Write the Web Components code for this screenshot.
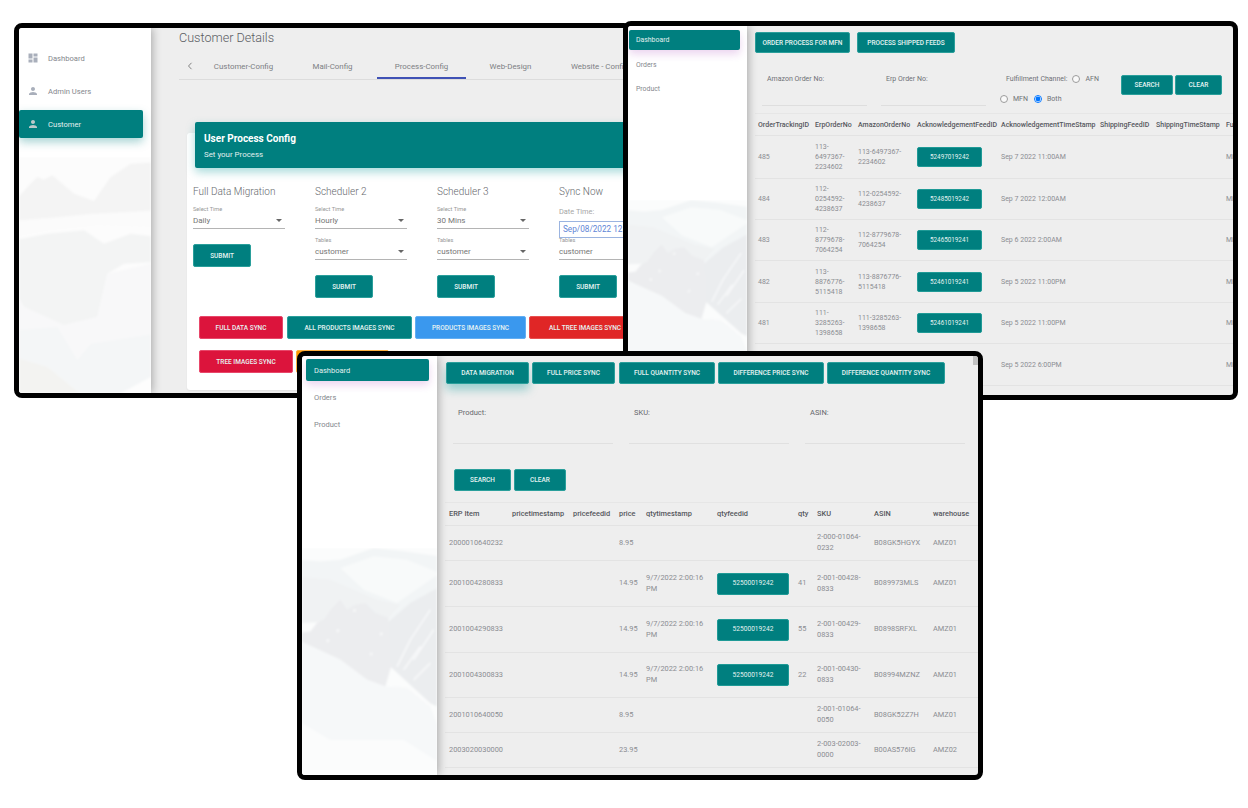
<!DOCTYPE html>
<html>
<head>
<meta charset="utf-8">
<title>Screens</title>
<style>
    html, body { margin: 0; height: 100%; background: #fff; overflow: hidden; }
    body { position: relative; width: 1248px; height: 808px; font-family: Roboto, "Liberation Sans", sans-serif; }
</style>
</head>
<body>

<app-window style="left:14px;top:23px;width:618px;height:375px">
    <side-bar slot="side" style="width:132px;--scene-h:236px;--pad:16px;--gap:5px;--ml:0px;--mr:8px;--fs:7.6px;--h:28px;--tx:8px;--glow:0 4px 10px rgba(0,128,128,.35)">
        <mountain-scene slot="scene" kind="peaks"></mountain-scene>
        <nav-item icon="dash">Dashboard</nav-item>
        <nav-item icon="user">Admin Users</nav-item>
        <nav-item icon="user" active>Customer</nav-item>
    </side-bar>
    <customer-view></customer-view>
</app-window>

<app-window style="left:623px;top:21px;width:615px;height:379px">
    <side-bar slot="side" style="width:119px;--scene-h:195px;--pad:4px;--gap:4.5px;--ml:1px;--mr:7px;--fs:6.9px;--h:20px;--tx:7px">
        <mountain-scene slot="scene" kind="valley"></mountain-scene>
        <nav-item active>Dashboard</nav-item>
        <nav-item>Orders</nav-item>
        <nav-item>Product</nav-item>
    </side-bar>
    <orders-view></orders-view>
</app-window>

<app-window style="left:297px;top:351px;width:686px;height:429px">
    <side-bar slot="side" style="width:135px;--scene-h:227px;--pad:3px;--gap:5px;--ml:4px;--mr:8px;--fs:7.5px;--h:22px;--tx:8px">
        <mountain-scene slot="scene" kind="valley"></mountain-scene>
        <nav-item active>Dashboard</nav-item>
        <nav-item>Orders</nav-item>
        <nav-item>Product</nav-item>
    </side-bar>
    <products-view></products-view>
</app-window>

<script>
const TEAL = '#007f7f';

class AppWindow extends HTMLElement {
    constructor() {
        super();
        this.attachShadow({ mode: 'open' });
        this.shadowRoot.innerHTML = `
            <style>
                :host {
                    position: absolute;
                    display: flex;
                    isolation: isolate;
                    box-sizing: border-box;
                    border: 5px solid #000;
                    border-radius: 8px;
                    background: #eee;
                    overflow: hidden;
                }
                .main {
                    flex: 1;
                    min-width: 0;
                    position: relative;
                    overflow: hidden;
                }
            </style>
            <slot name="side"></slot>
            <div class="main"><slot></slot></div>
        `;
    }
}

class SideBar extends HTMLElement {
    constructor() {
        super();
        this.attachShadow({ mode: 'open' });
        this.shadowRoot.innerHTML = `
            <style>
                :host {
                    display: block;
                    position: relative;
                    flex: none;
                    height: 100%;
                    background: #fff;
                    box-shadow: 1px 0 9px rgba(0, 0, 0, .32);
                    z-index: 2;
                }
                .nav {
                    position: relative;
                    display: flex;
                    flex-direction: column;
                    gap: var(--gap);
                    padding: var(--pad) var(--mr) 0 var(--ml);
                }
            </style>
            <slot name="scene"></slot>
            <div class="nav"><slot></slot></div>
        `;
    }
}

class MountainScene extends HTMLElement {
    constructor() {
        super();
        this.attachShadow({ mode: 'open' });
    }

    connectedCallback() {
        const peaks = `
            <svg viewBox="15 80 396 708" preserveAspectRatio="none">
                <rect x="0" y="80" width="430" height="720" fill="#fcfcfc"/>
                <polygon fill="#f4f4f4" points="0,215 45,165 70,140 90,148 115,135 150,165 180,190 240,212 290,140 350,100 430,95 430,240 300,255 240,250 120,262 0,272"/>
                <polygon fill="#fbfbfb" points="0,272 120,262 240,250 430,240 430,290 250,285 100,300 0,320"/>
                <polygon fill="#f3f4f4" points="0,330 100,310 210,300 270,340 350,310 430,320 430,395 330,400 280,430 250,560 150,585 30,530 0,480"/>
                <polygon fill="#f8f8f9" points="0,480 30,530 150,585 250,560 280,430 430,395 430,650 300,700 210,800 0,800"/>
                <polygon fill="#f4f6f7" points="0,600 130,590 190,690 230,640 430,610 430,730 300,800 210,800 100,710 0,680"/>
                <polygon fill="#f3f3f1" points="0,680 100,710 210,800 0,800"/>
                <polygon fill="#fdfdfd" points="300,800 430,730 430,800"/>
            </svg>`;
        const valley = `
            <svg viewBox="15 85 405 680" preserveAspectRatio="none">
                <rect x="0" y="85" width="430" height="690" fill="#fbfcfc"/>
                <polygon fill="#f2f5f6" points="0,120 70,125 130,120 230,85 320,95 430,110 430,300 0,300"/>
                <polygon fill="#f8fafa" points="130,145 230,110 330,120 430,160 300,250 200,210"/>
                <polygon fill="#f0f2f3" points="0,170 100,180 240,240 310,255 270,300 0,310"/>
                <polygon fill="#ebedef" points="430,200 340,250 270,310 280,440 400,550 430,565"/>
                <polygon fill="#ecedef" points="0,340 40,335 60,310 80,300 105,265 130,240 150,270 175,255 205,250 235,280 275,295 282,440 265,500 210,480 130,420 0,360"/>
                <polygon fill="#f6f8f9" points="0,360 130,420 210,480 265,500 330,505 400,560 430,640 430,730 320,660 100,660 160,775 0,775"/>
                <polygon fill="#fbfcfc" points="0,600 100,660 160,775 0,775"/>
                <polygon fill="#fbfcfc" points="100,660 320,660 430,730 430,775 160,775"/>
                <path d="M290 500 330 505 390 555M400 270 340 360 300 440M370 380 320 450M410 330 350 420M400 430 350 480" fill="none" stroke="#f8f9fa" stroke-width="5"/>
                <path d="M170 270 175 275M120 330 125 335M220 400 225 405M90 360 95 365M250 340 255 345" fill="none" stroke="#f9fafa" stroke-width="8"/>
            </svg>`;
        this.shadowRoot.innerHTML = `
            <style>
                :host {
                    position: absolute;
                    left: 0;
                    right: 0;
                    bottom: 0;
                    height: var(--scene-h);
                    overflow: hidden;
                }
                svg { display: block; width: 100%; height: 100%; filter: blur(1px); }
            </style>
            ${this.getAttribute('kind') === 'peaks' ? peaks : valley}
        `;
    }
}

class NavItem extends HTMLElement {
    constructor() {
        super();
        this.attachShadow({ mode: 'open' });
    }

    connectedCallback() {
        const icons = {
            dash: 'M3 13h8V3H3v10zm0 8h8v-6H3v6zm10 0h8V11h-8v10zm0-18v6h8V3h-8z',
            user: 'M12 12c2.21 0 4-1.79 4-4s-1.79-4-4-4-4 1.79-4 4 1.79 4 4 4zm0 2c-2.67 0-8 1.34-8 4v2h16v-2c0-2.66-5.33-4-8-4z'
        };
        const name = this.getAttribute('icon');
        const icon = name ? `<svg viewBox="0 0 24 24"><path d="${icons[name]}"/></svg>` : '';
        this.shadowRoot.innerHTML = `
            <style>
                :host {
                    display: flex;
                    align-items: center;
                    gap: 9px;
                    box-sizing: border-box;
                    height: var(--h);
                    padding-left: var(--tx);
                    font-size: var(--fs);
                    color: #85878d;
                    border-radius: 2px;
                }
                :host([active]) {
                    background: ${TEAL};
                    color: #e2f0ef;
                    box-shadow: var(--glow, 0 4px 8px rgba(156, 39, 176, .2));
                }
                svg { width: 12px; height: 12px; fill: #a9afbb; flex: none; }
                :host([active]) svg { fill: #bccaca; }
            </style>
            ${icon}<slot></slot>
        `;
    }
}

class TealBtn extends HTMLElement {
    constructor() {
        super();
        this.attachShadow({ mode: 'open' });
        this.shadowRoot.innerHTML = `
            <style>
                :host {
                    display: inline-flex;
                    align-items: center;
                    justify-content: center;
                    flex: none;
                    box-sizing: border-box;
                    width: var(--w, auto);
                    height: var(--bh, 23px);
                    background: var(--bg, ${TEAL});
                    border: 1px solid var(--line, #2a9f9b);
                    border-radius: 2px;
                    color: #e6f3f2;
                    font-size: 6.5px;
                    font-weight: 500;
                    white-space: nowrap;
                    overflow: hidden;
                }
            </style>
            <slot></slot>
        `;
    }
}

class SelectField extends HTMLElement {
    constructor() {
        super();
        this.attachShadow({ mode: 'open' });
        this.shadowRoot.innerHTML = `
            <style>
                :host {
                    display: block;
                    width: 92px;
                    border-bottom: 1px solid #b4b4b4;
                }
                .label {
                    height: 8px;
                    line-height: 8px;
                    font-size: 5.6px;
                    color: #989898;
                }
                .value {
                    display: flex;
                    justify-content: space-between;
                    align-items: center;
                    height: 15px;
                    font-size: 8px;
                    color: #767676;
                }
                .caret {
                    width: 0;
                    height: 0;
                    margin-right: 3px;
                    border: 3px solid transparent;
                    border-top: 3px solid #666;
                    border-bottom: 0;
                }
            </style>
            <div class="label"></div>
            <div class="value"><slot></slot><span class="caret"></span></div>
        `;
    }

    connectedCallback() {
        this.shadowRoot.querySelector('.label').textContent = this.getAttribute('label');
    }
}

class DataTable extends HTMLElement {
    constructor() {
        super();
        this.attachShadow({ mode: 'open' });
    }

    set data(t) {
        const cols = t.cols.map(c => c + 'px').join(' ');
        const cell = c => {
            if (c && c.btn) return `<div class="c"><teal-btn style="--w:${t.btnW}px;--bh:${t.btnH}px">${c.btn}</teal-btn></div>`;
            return `<div class="c">${c || ''}</div>`;
        };
        this.shadowRoot.innerHTML = `
            <style>
                :host {
                    display: block;
                    font-size: ${t.fs}px;
                    line-height: ${t.lh}px;
                    color: #8b8d92;
                }
                .r {
                    display: grid;
                    grid-template-columns: ${cols};
                    align-items: center;
                    box-sizing: border-box;
                    border-bottom: 1px solid #e3e3e3;
                }
                .head {
                    border-top: 1px solid #e6e6e6;
                    color: #55575d;
                    font-weight: 500;
                    white-space: nowrap;
                }
                .c {
                    box-sizing: border-box;
                    padding: 0 3px 0 ${t.pad}px;
                    min-width: 0;
                }
                .c teal-btn { font-size: ${t.btnFs}px; font-weight: 400; --line: #1f9a96; }
            </style>
            <div class="r head" style="height:${t.headH}px">${t.heads.map(h => `<div class="c">${h}</div>`).join('')}</div>
            ${t.rows.map((r, i) => `<div class="r" style="height:${t.heights[i]}px">${r.map(cell).join('')}</div>`).join('')}
        `;
    }
}

class CustomerView extends HTMLElement {
    constructor() {
        super();
        this.attachShadow({ mode: 'open' });
        const sel = (label, val) => `<select-field label="${label}">${val}</select-field>`;
        const sub = '<teal-btn style="--w:58px">SUBMIT</teal-btn>';
        this.shadowRoot.innerHTML = `
            <style>
                :host { display: block; padding-left: 28px; height: 100%; }
                h1 {
                    margin: 0;
                    height: 18px;
                    line-height: 19px;
                    font-size: 12.6px;
                    font-weight: 300;
                    color: #5a5d63;
                }
                .tabs {
                    display: flex;
                    margin-top: 7px;
                    height: 26px;
                    border-bottom: 1px solid #dcdcdc;
                    font-size: 7.9px;
                    color: #7c7e83;
                    white-space: nowrap;
                }
                .arrow { width: 20px; flex: none; display: flex; align-items: center; padding-left: 8px; box-sizing: border-box; }
                .arrow svg { width: 6px; height: 8px; fill: none; stroke: #777; stroke-width: .9; }
                .tab {
                    width: 89px;
                    flex: none;
                    display: flex;
                    align-items: center;
                    justify-content: center;
                    box-sizing: border-box;
                    height: 26px;
                }
                .tab.on { border-bottom: 2px solid #3f51b5; padding-top: 2px; }
                .card {
                    width: 520px;
                    height: 257px;
                    margin: 53px 0 0 8px;
                    background: #fff;
                    border-radius: 3px;
                    box-shadow: 0 1px 2px rgba(0, 0, 0, .06);
                }
                .card-head {
                    position: relative;
                    top: -11px;
                    box-sizing: border-box;
                    height: 46px;
                    margin-left: 8px;
                    padding: 10px 9px;
                    background: ${TEAL};
                    border-radius: 2px;
                    box-shadow: 0 4px 10px rgba(0, 150, 150, .35);
                    color: #fff;
                }
                .card-head b { display: block; font-size: 10px; line-height: 13px; font-weight: 700; }
                .card-head span { display: block; margin-top: 5px; font-size: 7.9px; line-height: 10px; color: #e0efef; }
                .body { margin-top: -11px; padding: 16px 0 0 6px; }
                .grid { display: grid; grid-template-columns: repeat(4, 122px); }
                .col h2 {
                    margin: 0 0 5px;
                    height: 16px;
                    line-height: 16px;
                    font-size: 10px;
                    font-weight: 300;
                    color: #66686d;
                }
                .col select-field + select-field { margin-top: 7px; }
                .col teal-btn { margin-top: 15px; }
                .dt { height: 16px; line-height: 14px; font-size: 7.4px; color: #a6a6a6; }
                .date {
                    box-sizing: border-box;
                    width: 92px;
                    height: 17px;
                    margin-bottom: -2px;
                    padding-left: 3px;
                    line-height: 15px;
                    border: 1px solid #9bb4e0;
                    font-size: 8.2px;
                    color: #5f86d6;
                    white-space: nowrap;
                    background: #fff;
                }
                .row { display: flex; gap: 3px; margin-left: 6px; }
                .row.a { margin-top: 18px; }
                .row.a teal-btn:first-child { margin-right: 1px; }
                .row.b { margin-top: 11px; }
            </style>
            <h1>Customer Details</h1>
            <div class="tabs">
                <div class="arrow"><svg viewBox="0 0 6 8"><path d="M4.5 .8 1.5 4l3 3.2"/></svg></div>
                <div class="tab">Customer-Config</div>
                <div class="tab">Mail-Config</div>
                <div class="tab on">Process-Config</div>
                <div class="tab">Web-Design</div>
                <div class="tab">Website - Config</div>
            </div>
            <div class="card">
                <div class="card-head"><b>User Process Config</b><span>Set your Process</span></div>
                <div class="body">
                    <div class="grid">
                        <div class="col"><h2>Full Data Migration</h2>${sel('Select Time', 'Daily')}${sub}</div>
                        <div class="col"><h2>Scheduler 2</h2>${sel('Select Time', 'Hourly')}${sel('Tables', 'customer')}${sub}</div>
                        <div class="col"><h2>Scheduler 3</h2>${sel('Select Time', '30 Mins')}${sel('Tables', 'customer')}${sub}</div>
                        <div class="col"><h2>Sync Now</h2><div class="dt">Date Time:</div><div class="date">Sep/08/2022 12:00</div>${sel('Tables', 'customer')}${sub}</div>
                    </div>
                    <div class="row a">
                        <teal-btn style="--bg:#dc143c;--line:#e8476a;--w:84px">FULL DATA SYNC</teal-btn>
                        <teal-btn style="--w:125px">ALL PRODUCTS IMAGES SYNC</teal-btn>
                        <teal-btn style="--bg:#3a98ee;--line:#62aef3;--w:111px">PRODUCTS IMAGES SYNC</teal-btn>
                        <teal-btn style="--bg:#e02626;--line:#e85050;--w:112px">ALL TREE IMAGES SYNC</teal-btn>
                    </div>
                    <div class="row b">
                        <teal-btn style="--bg:#dc143c;--line:#e8476a;--w:94px">TREE IMAGES SYNC</teal-btn>
                        <teal-btn style="--bg:#ff9800;--line:#ffb040;--w:93px"></teal-btn>
                    </div>
                </div>
            </div>
        `;
    }
}

class OrdersView extends HTMLElement {
    constructor() {
        super();
        this.attachShadow({ mode: 'open' });
        this.shadowRoot.innerHTML = `
            <style>
                :host { display: block; padding: 6px 0 0 8px; height: 100%; box-sizing: border-box; color: #6f7176; }
                .tools { display: flex; gap: 7px; --bh: 21px; }
                .form { display: flex; height: 60px; font-size: 7px; }
                .field { box-sizing: border-box; width: 105px; height: 53px; margin-right: 14px; padding: 21px 0 0 5px; line-height: 10px; border-bottom: 1px solid #dedede; }
                .first { margin-left: 7px; }
                .channel { width: 118px; padding-top: 21px; line-height: 10px; flex: none; }
                .channel .line { display: flex; align-items: center; height: 10px; padding-left: 6px; }
                .channel .line + .line { margin-top: 10px; padding-left: 0; }
                input { width: 8px; height: 8px; margin: 0 5px 0 0; flex: none; }
                input:not(:checked) { opacity: .7; }
                .afn { margin-left: 5px; }
                .both { margin-left: 6px; }
                .actions { display: flex; gap: 2px; margin: 22px 0 0 3px; --bh: 20px; }
            </style>
            <div class="tools">
                <teal-btn style="--w:95px">ORDER PROCESS FOR MFN</teal-btn>
                <teal-btn style="--w:98px">PROCESS SHIPPED FEEDS</teal-btn>
            </div>
            <div class="form">
                <div class="field first">Amazon Order No:</div>
                <div class="field">Erp Order No:</div>
                <div class="channel">
                    <div class="line">Fulfillment Channel:<input class="afn" type="radio" name="c">AFN</div>
                    <div class="line"><input type="radio" name="d">MFN<input class="both" type="radio" name="d" checked>Both</div>
                </div>
                <div class="actions">
                    <teal-btn style="--w:52px">SEARCH</teal-btn>
                    <teal-btn style="--w:47px">CLEAR</teal-btn>
                </div>
            </div>
            <data-table></data-table>
        `;
        this.shadowRoot.querySelector('data-table').data = {
            cols: [57, 43, 59, 84, 99, 56, 70, 12],
            pad: 3, fs: 7, lh: 10, btnW: 65, btnH: 20, btnFs: 6.3, headH: 23,
            heads: ['OrderTrackingID', 'ErpOrderNo', 'AmazonOrderNo', 'AcknowledgementFeedID', 'AcknowledgementTimeStamp', 'ShippingFeedID', 'ShippingTimeStamp', 'Fu'],
            heights: [43, 41, 41, 42, 41, 42],
            rows: [
                ['485', '113-6497367-2234602', '113-6497367-2234602', { btn: '52497019242' }, 'Sep 7 2022 11:00AM', '', '', 'Mi'],
                ['484', '112-0254592-4238637', '112-0254592-4238637', { btn: '52485019242' }, 'Sep 7 2022 12:00AM', '', '', 'Mi'],
                ['483', '112-8779678-7064254', '112-8779678-7064254', { btn: '52465019241' }, 'Sep 6 2022 2:00AM', '', '', 'Mi'],
                ['482', '113-8876776-5115418', '113-8876776-5115418', { btn: '52461019241' }, 'Sep 5 2022 11:00PM', '', '', 'Mi'],
                ['481', '111-3285263-1398658', '111-3285263-1398658', { btn: '52461019241' }, 'Sep 5 2022 11:00PM', '', '', 'Mi'],
                ['', '', '', '', 'Sep 5 2022 6:00PM', '', '', 'Mi']
            ]
        };
    }
}

class ProductsView extends HTMLElement {
    constructor() {
        super();
        this.attachShadow({ mode: 'open' });
        const ts = '9/7/2022 2:00:16 PM';
        const fid = { btn: '52500019242' };
        this.shadowRoot.innerHTML = `
            <style>
                :host { display: block; padding: 6px 0 0 9px; height: 100%; box-sizing: border-box; color: #66686d; --bh: 22px; }
                .tools { display: flex; gap: 3px; }
                .tools teal-btn:first-child { box-shadow: 0 6px 10px rgba(0, 150, 150, .35); }
                .tools teal-btn:nth-child(2) { margin-right: 1px; }
                .form { display: grid; grid-template-columns: repeat(3, 160px); gap: 16px; margin: 19px 0 0 7px; font-size: 7.5px; }
                .field { box-sizing: border-box; height: 41px; padding: 5px 0 0 5px; line-height: 10px; border-bottom: 1px solid #e0e0e0; }
                .actions { display: flex; gap: 3px; margin: 25px 0 0 8px; }
                data-table { margin: 11px 0 0 -1px; }
                .scroll { position: absolute; right: 0; top: 0; width: 5px; height: 9px; background: #c1c1c1; }
            </style>
            <div class="tools">
                <teal-btn style="--w:83px">DATA MIGRATION</teal-btn>
                <teal-btn style="--w:83px">FULL PRICE SYNC</teal-btn>
                <teal-btn style="--w:96px">FULL QUANTITY SYNC</teal-btn>
                <teal-btn style="--w:106px">DIFFERENCE PRICE SYNC</teal-btn>
                <teal-btn style="--w:118px">DIFFERENCE QUANTITY SYNC</teal-btn>
            </div>
            <div class="form">
                <div class="field">Product:</div>
                <div class="field">SKU:</div>
                <div class="field">ASIN:</div>
            </div>
            <div class="actions">
                <teal-btn style="--w:57px">SEARCH</teal-btn>
                <teal-btn style="--w:52px">CLEAR</teal-btn>
            </div>
            <data-table></data-table>
            <div class="scroll"></div>
        `;
        this.shadowRoot.querySelector('data-table').data = {
            cols: [63, 61, 46, 27, 71, 81, 19, 57, 59, 44],
            pad: 4, fs: 7.4, lh: 10.6, btnW: 72, btnH: 22, btnFs: 6.6, headH: 24,
            heads: ['ERP Item', 'pricetimestamp', 'pricefeedid', 'price', 'qtytimestamp', 'qtyfeedid', 'qty', 'SKU', 'ASIN', 'warehouse'],
            heights: [35, 46, 46, 45, 35, 35],
            rows: [
                ['2000010640232', '', '', '8.95', '', '', '', '2-000-01064-0232', 'B08GK5HGYX', 'AMZ01'],
                ['2001004280833', '', '', '14.95', ts, fid, '41', '2-001-00428-0833', 'B089973MLS', 'AMZ01'],
                ['2001004290833', '', '', '14.95', ts, fid, '55', '2-001-00429-0833', 'B0898SRFXL', 'AMZ01'],
                ['2001004300833', '', '', '14.95', ts, fid, '22', '2-001-00430-0833', 'B08994MZNZ', 'AMZ01'],
                ['2001010640050', '', '', '8.95', '', '', '', '2-001-01064-0050', 'B08GK52Z7H', 'AMZ01'],
                ['2003020030000', '', '', '23.95', '', '', '', '2-003-02003-0000', 'B00AS576IG', 'AMZ02']
            ]
        };
    }
}

customElements.define('teal-btn', TealBtn);
customElements.define('select-field', SelectField);
customElements.define('data-table', DataTable);
customElements.define('nav-item', NavItem);
customElements.define('mountain-scene', MountainScene);
customElements.define('side-bar', SideBar);
customElements.define('customer-view', CustomerView);
customElements.define('orders-view', OrdersView);
customElements.define('products-view', ProductsView);
customElements.define('app-window', AppWindow);
</script>
</body>
</html>
